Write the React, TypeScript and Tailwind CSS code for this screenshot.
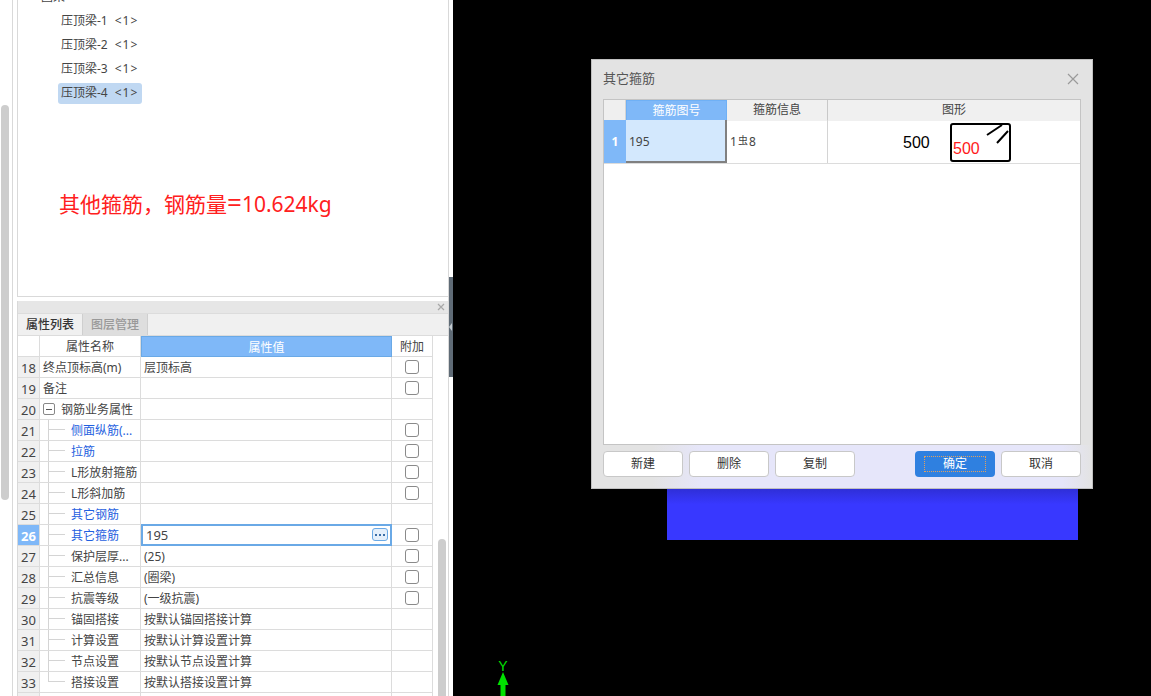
const FONT = "font-['Noto_Sans','Noto_Sans_CJK_SC',sans-serif]";

type Row = {
  no: number;
  name: string;
  value?: string;
  check?: boolean;
  blue?: boolean;
  level?: 0 | 1 | 2;
  last?: boolean;
  editing?: boolean;
};

const ROWS: Row[] = [
  { no: 18, name: "终点顶标高(m)", value: "层顶标高", check: true },
  { no: 19, name: "备注", check: true },
  { no: 20, name: "钢筋业务属性", level: 1 },
  { no: 21, name: "侧面纵筋(...", check: true, blue: true, level: 2 },
  { no: 22, name: "拉筋", check: true, blue: true, level: 2 },
  { no: 23, name: "L形放射箍筋", check: true, level: 2 },
  { no: 24, name: "L形斜加筋", check: true, level: 2 },
  { no: 25, name: "其它钢筋", blue: true, level: 2 },
  { no: 26, name: "其它箍筋", value: "195", check: true, blue: true, level: 2, editing: true },
  { no: 27, name: "保护层厚...", value: "(25)", check: true, level: 2 },
  { no: 28, name: "汇总信息", value: "(圈梁)", check: true, level: 2 },
  { no: 29, name: "抗震等级", value: "(一级抗震)", check: true, level: 2 },
  { no: 30, name: "锚固搭接", value: "按默认锚固搭接计算", level: 2 },
  { no: 31, name: "计算设置", value: "按默认计算设置计算", level: 2 },
  { no: 32, name: "节点设置", value: "按默认节点设置计算", level: 2 },
  { no: 33, name: "搭接设置", value: "按默认搭接设置计算", level: 2, last: true },
];

function PropRow({ row }: { row: Row }) {
  return (
    <div className="grid h-[21px] grid-cols-[22px_101px_251px_41px] grid-rows-[21px] text-[12px] leading-[22px] text-[#444]">
      <div
        className={
          row.editing
            ? "border-b border-r border-[#dcdcdc] bg-[#7fb8f8] text-center text-[13px] font-bold text-white"
            : "border-b border-r border-[#dcdcdc] bg-[#f0f0f0] text-center text-[13px] text-[#444]"
        }
      >
        {row.no}
      </div>
      <div className="flex items-stretch overflow-hidden whitespace-nowrap border-b border-r border-[#dcdcdc] pl-[3px]">
        {row.level === 2 && (
          <div className="ml-[5px] mr-[6px] flex w-[17px] shrink-0 flex-col">
            <div className="h-[10px] border-b border-l border-[#d4d4d4]" />
            {!row.last && <div className="flex-1 border-l border-[#d4d4d4]" />}
          </div>
        )}
        {row.level === 1 && (
          <div className="mr-[6px] flex items-center">
            <div className="flex h-[12px] w-[12px] items-center justify-center rounded-[2px] border border-[#888]">
              <div className="h-px w-[6px] bg-[#555]" />
            </div>
          </div>
        )}
        <span className={row.blue ? "text-[#1f5fe0]" : ""}>{row.name}</span>
      </div>
      {row.editing ? (
        <div className="-mt-px flex h-[22px] items-center justify-between border-2 border-[#6aa9e6] bg-white pl-[3px] pr-[2px] text-[13px]">
          <span>{row.value}</span>
          <div className="-mt-px flex h-[13px] w-[16px] items-center justify-center gap-[2px] rounded-[3px] border border-[#6aa9e6] bg-[#e4effb]">
            <div className="h-[2px] w-[2px] bg-[#3a6ea8]" />
            <div className="h-[2px] w-[2px] bg-[#3a6ea8]" />
            <div className="h-[2px] w-[2px] bg-[#3a6ea8]" />
          </div>
        </div>
      ) : (
        <div className="border-b border-r border-[#dcdcdc] pl-[3px]">{row.value}</div>
      )}
      <div className="flex items-center justify-center border-b border-r border-[#dcdcdc]">
        {row.check && <div className="h-[14px] w-[14px] rounded-[3px] border border-[#8a8a8a] bg-white" />}
      </div>
    </div>
  );
}

function TreeItem({ label, selected }: { label: string; selected?: boolean }) {
  return (
    <div className="flex h-[24px] items-center pl-[40px]">
      <div
        className={
          selected
            ? "flex h-[21px] w-[84px] items-center rounded-[3px] bg-[#c0d8f2] pl-[3px]"
            : "flex h-[21px] items-center pl-[3px]"
        }
      >
        {label}
        <span className="ml-[7px] tracking-[1px]">&lt;1&gt;</span>
      </div>
    </div>
  );
}

function DialogButton({ label }: { label: string }) {
  return (
    <button className="h-[26px] w-[80px] rounded-[4px] border border-[#c8c8c8] bg-white text-[12px] text-[#333]">
      {label}
    </button>
  );
}

function Dialog() {
  return (
    <div className="absolute left-[138px] top-[59px] flex h-[430px] w-[502px] flex-col border border-[#c0c0c0] bg-[#e3e3e3]">
      <div className="flex h-[39px] shrink-0 items-center justify-between pb-px pl-[11px] pr-[12px] text-[13px] text-[#555]">
        <span>其它箍筋</span>
        <svg width="14" height="14" viewBox="0 0 14 14" stroke="#9a9a9a" strokeWidth="1.2">
          <path d="M2 2l10 10M12 2L2 12" />
        </svg>
      </div>
      <div className="mx-[11px] flex h-[346px] shrink-0 flex-col border border-[#c4c4c4] bg-white">
        <div className="grid h-[20px] shrink-0 grid-cols-[22px_101px_101px_1fr] border-b border-[#c8c8c8] text-center text-[12px] leading-[19px] text-[#444]">
          <div className="border-r border-[#d4d4d4] bg-[#efefef]" />
          <div className="border border-[#6fb0f5] bg-[#7fb8f8] text-white">箍筋图号</div>
          <div className="border-r border-[#c8c8c8] bg-[#f0f0f0]">箍筋信息</div>
          <div className="bg-[#f0f0f0]">图形</div>
        </div>
        <div className="grid h-[44px] shrink-0 grid-cols-[22px_101px_101px_1fr] border-b border-[#dcdcdc] text-[12px] text-[#444]">
          <div className="flex items-center justify-center bg-[#7fb8f8] font-bold text-white">1</div>
          <div className="flex items-center border-b-2 border-r-2 border-[#808080] bg-[#d3e8fd] pl-[3px] pt-[3px]">195</div>
          <div className="flex items-center border-r border-[#d4d4d4] pl-[3px]">
            1
            <span className="mx-[1px] -mt-[2px] text-[10px]">虫</span>8
          </div>
          <div className="flex items-center pl-[75px] pt-[1px]">
            <span className="mt-px w-[47px] font-['Liberation_Sans',sans-serif] text-[16px] text-black">500</span>
            <svg width="61" height="39" viewBox="0 0 61 39">
              <rect x="1" y="1" width="59" height="37" rx="2" fill="white" stroke="black" strokeWidth="2" />
              <path d="M37 12L52 2M47 20L58 8" stroke="black" strokeWidth="2" fill="none" />
              <text x="3" y="31" fontSize="16" fill="#ff1a1a" fontFamily="Liberation Sans, sans-serif">
                500
              </text>
            </svg>
          </div>
        </div>
      </div>
      <div className="flex flex-1 items-start justify-between bg-[linear-gradient(to_right,#e3e3e3_12%,#e6e6fa_22%,#e6e6fa_94%,#e3e3e3)] px-[11px] pt-[6px]">
        <div className="flex gap-[6px]">
          <DialogButton label="新建" />
          <DialogButton label="删除" />
          <DialogButton label="复制" />
        </div>
        <div className="flex gap-[6px]">
          <button className="flex h-[26px] w-[80px] items-center justify-center rounded-[4px] bg-[#2f80e0] text-[12px] text-white">
            <span className="flex h-[16px] w-[62px] items-center justify-center border border-dotted border-[#e0a060]">确定</span>
          </button>
          <DialogButton label="取消" />
        </div>
      </div>
    </div>
  );
}

export default function App() {
  return (
    <div className={`flex h-[696px] w-[1151px] overflow-hidden bg-black ${FONT}`}>
      <div className="flex h-full w-[453px] shrink-0 bg-white text-[#444]">
        {/* left scrollbar */}
        <div className="w-[13px] shrink-0 border-r border-[#d9d9d9] pl-px pt-[105px]">
          <div className="h-[395px] w-[8px] rounded-[4px] bg-[#cdcdcd]" />
        </div>
        <div className="flex w-[436px] shrink-0 flex-col border-r border-[#d9d9d9] pl-[4px]">
          {/* tree */}
          <div className="h-[297px] shrink-0 overflow-hidden border-b border-l border-[#d9d9d9] text-[12px]">
            <div className="-mt-[15px] flex h-[24px] items-center pl-[23px]">圈梁</div>
            <TreeItem label="压顶梁-1" />
            <TreeItem label="压顶梁-2" />
            <TreeItem label="压顶梁-3" />
            <TreeItem label="压顶梁-4" selected />
            <div className="pl-[41px] pt-[83px] text-[21px] leading-[28px] text-[#ff2020]">
              其他箍筋，钢筋量<span className="text-[26px] leading-[28px]">=</span>10.624kg
            </div>
          </div>
          {/* properties */}
          <div className="mt-[4px] flex flex-1 flex-col overflow-hidden border-l border-[#d9d9d9]">
            <div className="flex h-[12px] shrink-0 items-center justify-end bg-[#e6e6e6] pr-[3px]">
              <svg width="8" height="8" viewBox="0 0 8 8" stroke="#a8a8a8" strokeWidth="1.2">
                <path d="M1 1l6 6M7 1L1 7" />
              </svg>
            </div>
            <div className="flex h-[23px] shrink-0 border-y border-[#dcdcdc] bg-[#f0f0f0] text-[12px] leading-[21px]">
              <div className="w-[65px] border-r border-[#cfcfcf] text-center font-medium text-[#333]">属性列表</div>
              <div className="w-[65px] border-r border-[#cfcfcf] bg-[#dedede] text-center font-medium text-[#999]">图层管理</div>
            </div>
            <div className="flex flex-1 overflow-hidden">
              <div className="w-[415px] shrink-0">
                <div className="grid h-[21px] grid-cols-[22px_101px_251px_41px] grid-rows-[21px] text-center text-[12px] leading-[21px] text-[#444]">
                  <div className="border-b border-r border-[#dcdcdc]" />
                  <div className="border-b border-r border-[#dcdcdc]">属性名称</div>
                  <div className="border border-[#6aa9e6] bg-[#7fb8f8] text-white">属性值</div>
                  <div className="border-b border-r border-[#dcdcdc]">附加</div>
                </div>
                {ROWS.map((row) => (
                  <PropRow key={row.no} row={row} />
                ))}
                <div className="grid h-[21px] grid-cols-[22px_101px_251px_41px]">
                  <div className="border-r border-[#dcdcdc] bg-[#f0f0f0]" />
                  <div className="border-r border-[#dcdcdc]" />
                  <div className="border-r border-[#dcdcdc]" />
                  <div className="border-r border-[#dcdcdc]" />
                </div>
              </div>
              {/* right scrollbar */}
              <div className="pl-[5px] pt-[203px]">
                <div className="h-[170px] w-[8px] rounded-t-[4px] bg-[#cdcdcd]" />
              </div>
            </div>
          </div>
        </div>
        {/* splitter */}
        <div className="w-[4px] shrink-0 pt-[277px]">
          <div className="flex h-[100px] items-center bg-[#5f6b76]">
            <svg width="3" height="8" viewBox="0 0 3 8" fill="#c4cad0">
              <path d="M3 0v8L0 4z" />
            </svg>
          </div>
        </div>
      </div>
      {/* canvas */}
      <div className="relative flex-1">
        <div className="absolute left-[214px] top-[489px] h-[51px] w-[411px] bg-[linear-gradient(to_bottom,#2f2fd8,#3838ff_30%)]" />
        <div className="absolute left-[44px] top-[660px] flex w-[12px] flex-col items-center text-[#00e000]">
          <span className="font-['Liberation_Sans',sans-serif] text-[14px] leading-[13px]">Y</span>
          <svg width="12" height="24" viewBox="0 0 12 24" fill="#00e000" className="-mt-px">
            <path d="M6 0L11.5 13H8.5V24H3.5V13H0.5z" />
          </svg>
        </div>
        <Dialog />
      </div>
    </div>
  );
}
